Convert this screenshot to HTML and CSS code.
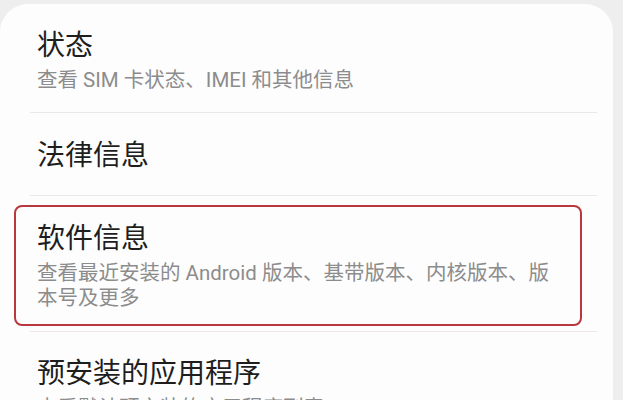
FILE: index.html
```html
<!DOCTYPE html>
<html lang="zh-CN">
<head>
    <meta charset="UTF-8">
    <meta name="viewport" content="width=device-width, initial-scale=1.0">
    <title>关于手机</title>
    <link rel="stylesheet" href="styles.css">
</head>
<body>
<div id="app">
    <section class="card">
        <ul class="menu">
            <li class="item">
                <div class="title">状态</div>
                <div class="desc">查看 SIM 卡状态、IMEI 和其他信息</div>
            </li>
            <li class="item single">
                <div class="title">法律信息</div>
            </li>
            <li class="item active">
                <div class="title">软件信息</div>
                <div class="desc">查看最近安装的 Android 版本、基带版本、内核版本、版本号及更多</div>
                <span class="mark"></span>
            </li>
            <li class="item last">
                <div class="title">预安装的应用程序</div>
                <div class="desc">查看默认预安装的应用程序列表</div>
            </li>
        </ul>
    </section>
</div>
</body>
</html>
```

FILE: styles.css
```css
* {
    margin: 0;
    padding: 0;
}

ul {
    list-style: none;
}

html, body, #app {
    width: 100%;
    height: 100%;
    overflow: hidden;
}

body {
    background: #eeeeee;
    font-family: Roboto, "Noto Sans CJK SC", sans-serif;
}

#app {
    padding-top: 4px;
    box-sizing: border-box;
}

.card {
    width: 613px;
    min-height: 420px;
    background: #fdfdfd;
    border-radius: 28px 28px 0 0;
    padding: 0 16px 0 30px;
    box-sizing: border-box;
}

.menu .item {
    position: relative;
    padding: 25px 30px 19px 7px;
    border-bottom: 1px solid #e8e8e8;
}

.menu .item.single {
    padding-top: 26px;
    padding-bottom: 22px;
}

.menu .item.active {
    padding-top: 26px;
    padding-bottom: 20px;
    border-bottom-color: #f0e4ec;
}

.menu .item.last {
    padding-top: 25px;
    border-bottom: none;
}

.menu .title {
    font-size: 28px;
    line-height: 34px;
    color: #1e1e1e;
}

.menu .desc {
    margin-top: 5px;
    font-size: 20.5px;
    line-height: 25px;
    color: #8c8c8c;
}

.menu .mark {
    position: absolute;
    left: -16px;
    top: 9px;
    right: 15px;
    bottom: 5px;
    border: 2px solid #b7393d;
    border-radius: 8px;
}
```
